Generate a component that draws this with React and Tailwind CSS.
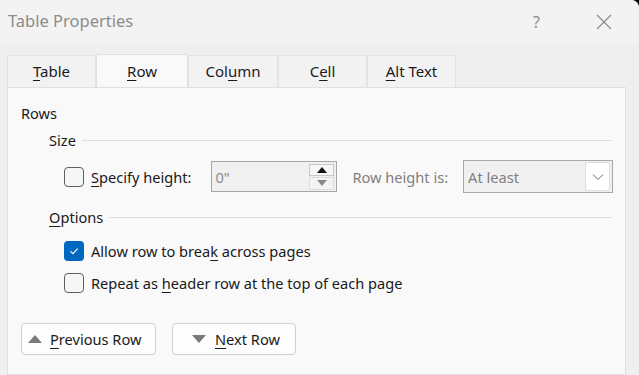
import React from "react";

const font = { fontFamily: '"Noto Sans", "Open Sans", sans-serif' };

function Tab({ children, active, className = "" }) {
  if (active) {
    return (
      <div className={`-mb-px flex h-[34px] items-center justify-center border border-b-0 border-[#e0e0e0] bg-[#f9f9f9] ${className}`}>
        {children}
      </div>
    );
  }
  return (
    <div className={`flex h-[32px] items-center justify-center border border-b-0 border-[#e3e3e3] bg-[#f2f2f2] ${className}`}>
      {children}
    </div>
  );
}

function Box({ checked }) {
  if (checked) {
    return (
      <div className="flex h-[20px] w-[20px] shrink-0 items-center justify-center rounded-[4px] bg-[#0067c0]">
        <svg width="12" height="12" viewBox="0 0 12 12">
          <path d="M2.5 6.3 L5 8.6 L9.6 3.6" fill="none" stroke="#fff" strokeWidth="1.1" />
        </svg>
      </div>
    );
  }
  return <div className="h-[20px] w-[20px] shrink-0 rounded-[4px] border border-[#5f5f5f] bg-[#f6f6f6]" />;
}

function Group({ title, children }) {
  return (
    <div>
      <div className="flex items-center gap-[6px]">
        <span className="whitespace-nowrap">{title}</span>
        <div className="h-px flex-1 bg-[#dcdcdc]" />
      </div>
      {children}
    </div>
  );
}

export default function App() {
  return (
    <div className="h-[375px] w-[639px] overflow-hidden whitespace-nowrap bg-black text-[14.6px] text-[#1a1a1a]" style={font}>
      <div className="flex h-full flex-col rounded-tr-[8px] bg-[#efefef]">
        {/* Title bar */}
        <div className="flex h-[43px] shrink-0 items-center rounded-tr-[8px] bg-[#f3f3f3] pl-[8px]">
          <span className="text-[16.5px] text-[#8c8c8c]">Table Properties</span>
          <span className="ml-auto mr-[56px] text-[16px] text-[#8c8c8c]">?</span>
          <svg className="mr-[27px]" width="16" height="16" viewBox="0 0 16 16">
            <path d="M1 1 L15 15 M15 1 L1 15" stroke="#8a8a8a" strokeWidth="1.1" />
          </svg>
        </div>

        {/* Tabs */}
        <div className="mt-[11px] flex shrink-0 items-end pl-[7px] text-[15px]">
          <Tab className="w-[89px]">
            <span><u className="underline-offset-[3px]">T</u>able</span>
          </Tab>
          <Tab active className="w-[92px]">
            <span><u className="underline-offset-[3px]">R</u>ow</span>
          </Tab>
          <Tab className="w-[90px]">
            <span>Col<u className="underline-offset-[3px]">u</u>mn</span>
          </Tab>
          <Tab className="w-[89px]">
            <span>C<u className="underline-offset-[3px]">e</u>ll</span>
          </Tab>
          <Tab className="w-[89px]">
            <span><u className="underline-offset-[3px]">A</u>lt Text</span>
          </Tab>
        </div>

        {/* Panel */}
        <div className="ml-[7px] mr-[13px] flex-1 border border-[#e0e0e0] bg-[#f9f9f9] pl-[13px] pr-[13px] pt-[15px]">
          <div className="leading-[20px]">Rows</div>

          <div className="ml-[28px] mt-[7px] leading-[20px]">
            <Group title="Size">
              <div className="mt-[10px] flex items-center">
                <div className="ml-[15px]"><Box /></div>
                <span className="ml-[7px]"><u className="underline-offset-[3px]">S</u>pecify height:</span>
                <div className="ml-[20px] flex h-[31px] w-[126px] shrink-0 items-center border border-[#a6a6a6] bg-[#f0f0f0] pl-[3px] pr-[2px]">
                  <span className="text-[#8a8a8a]">0"</span>
                  <div className="ml-auto flex h-[26px] w-[25px] flex-col gap-px">
                    <div className="flex flex-1 items-center justify-center border border-[#c8c8c8] bg-[#f7f7f7]">
                      <svg width="10" height="6" viewBox="0 0 10 6"><path d="M0 6 L5 0 L10 6 Z" fill="#111" /></svg>
                    </div>
                    <div className="flex flex-1 items-center justify-center border border-[#dcdcdc] bg-[#f3f3f3]">
                      <svg width="10" height="6" viewBox="0 0 10 6"><path d="M0 0 L10 0 L5 6 Z" fill="#8a8a8a" /></svg>
                    </div>
                  </div>
                </div>
                <span className="ml-[15px] text-[#808080]">Row height is:</span>
                <div className="ml-[15px] flex h-[33px] w-[150px] shrink-0 items-center border border-[#a8a8a8] bg-[#f0f0f0] pl-[4px] pr-[2px]">
                  <span className="text-[#808080]">At least</span>
                  <div className="ml-auto flex h-[29px] w-[25px] items-center justify-center rounded-[2px] border border-[#dedede] bg-white">
                    <svg width="12" height="8" viewBox="0 0 12 8"><path d="M1 1.5 L6 6.5 L11 1.5" fill="none" stroke="#6a6a6a" strokeWidth="1" /></svg>
                  </div>
                </div>
              </div>
            </Group>

            <div className="mt-[14px]">
              <Group title={<span><u className="underline-offset-[3px]">O</u>ptions</span>}>
                <div className="ml-[15px] mt-[14px] flex items-center gap-[7px]">
                  <Box checked />
                  <span>Allow row to brea<u className="underline-offset-[3px]">k</u> across pages</span>
                </div>
                <div className="ml-[15px] mt-[12px] flex items-center gap-[7px]">
                  <Box />
                  <span>Repeat as <u className="underline-offset-[3px]">h</u>eader row at the top of each page</span>
                </div>
              </Group>
            </div>
          </div>

          <div className="mt-[30px] flex gap-[16px] leading-[20px]">
            <button className="flex h-[32px] w-[135px] items-center rounded-[4px] border border-[#d0d0d0] bg-[#fdfdfd] pl-[6px]">
              <svg width="14" height="8" viewBox="0 0 14 8"><path d="M0 8 L7 0 L14 8 Z" fill="#7a7a7a" /></svg>
              <span className="ml-[8px]"><u className="underline-offset-[3px]">P</u>revious Row</span>
            </button>
            <button className="flex h-[32px] w-[124px] items-center rounded-[4px] border border-[#d0d0d0] bg-[#fdfdfd] pl-[19px]">
              <svg width="14" height="8" viewBox="0 0 14 8"><path d="M0 0 L14 0 L7 8 Z" fill="#7a7a7a" /></svg>
              <span className="ml-[9px]"><u className="underline-offset-[3px]">N</u>ext Row</span>
            </button>
          </div>
        </div>
      </div>
    </div>
  );
}
